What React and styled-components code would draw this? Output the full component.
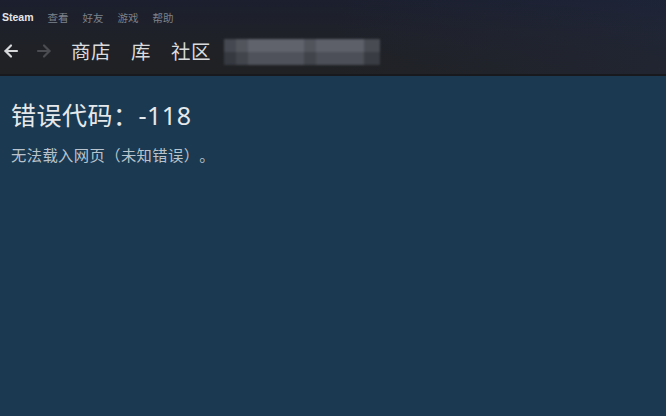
import React from "react";
import styled, { createGlobalStyle } from "styled-components";

const Global = createGlobalStyle`
  html, body { margin: 0; padding: 0; height: 100%; }
  body { background: #1b3951; overflow: hidden; text-spacing-trim: space-all; }
  #root { height: 100%; }
`;

const FONT = `"Noto Sans", "Noto Sans CJK SC", sans-serif`;

const Page = styled.div`
  width: 666px;
  height: 416px;
  display: flex;
  flex-direction: column;
  font-family: ${FONT};
`;

const Header = styled.header`
  height: 74px;
  flex: none;
  display: flex;
  flex-direction: column;
  background:
    linear-gradient(100deg, rgba(0,0,0,0) 50%, rgba(35,45,75,0.35) 100%),
    linear-gradient(to bottom, #1b1f2e 0%, #1f2129 45%, #202123 100%);
  border-bottom: 2px solid #18191c;
`;

const MenuBar = styled.nav`
  height: 34px;
  display: flex;
  align-items: center;
  gap: 14px;
  padding: 0 0 0 2px;
  font-size: 10.5px;
`;

const MenuItem = styled.span`
  color: ${(p) => (p.$primary ? "#e4e6e8" : "#7d828b")};
  font-weight: ${(p) => (p.$primary ? 700 : 400)};
  font-family: ${(p) => (p.$primary ? `"Liberation Sans", Arial, sans-serif` : FONT)};
`;

const NavBar = styled.div`
  flex: 1;
  display: flex;
  align-items: center;
  padding-left: 3px;
  padding-bottom: 7px;
`;

const ArrowBtn = styled.span`
  width: 16px;
  height: 16px;
  display: flex;
  margin-right: ${(p) => p.$mr}px;
  color: ${(p) => (p.$disabled ? "#4a4c52" : "#d6d8da")};
`;

const NavLink = styled.span`
  font-size: 19.5px;
  color: #d9dbdd;
  margin-right: ${(p) => p.$mr}px;
  letter-spacing: 0.5px;
`;

const Blur = styled.div`
  width: 156px;
  height: 26px;
  margin-left: 3px;
  margin-top: 2px;
  filter: blur(1.2px);
  background:
    linear-gradient(to bottom, rgba(255,255,255,0.04) 0 50%, rgba(0,0,0,0.12) 50% 100%),
    linear-gradient(to right, #3e4149 0 12px, #4b4e56 12px 24px, #5a5d66 24px 80px, #4a4d55 80px 92px, #575a63 92px 140px, #41444b 140px 156px);
`;

const Body = styled.main`
  flex: 1;
  background: #1b3951;
  padding: 20px 11px;
  color: #dfe3e6;
`;

const Title = styled.h1`
  margin: 0;
  font-size: 25px;
  font-weight: 400;
  line-height: 38px;
  letter-spacing: 0.5px;
  color: #e6e9eb;
`;

const Message = styled.p`
  margin: 10px 0 0;
  font-size: 15.3px;
  line-height: 22px;
  letter-spacing: 0.4px;
  color: #b9c3cb;
`;

const Arrow = ({ dir }) => (
  <svg width="16" height="16" viewBox="0 0 16 16" fill="none" stroke="currentColor" strokeWidth="2.2" strokeLinecap="round" strokeLinejoin="round">
    {dir === "left" ? (
      <>
        <path d="M14 8H2.5" />
        <path d="M8 2.5L2.5 8L8 13.5" />
      </>
    ) : (
      <>
        <path d="M2 8h11.5" />
        <path d="M8 2.5l5.5 5.5L8 13.5" />
      </>
    )}
  </svg>
);

export default function App() {
  return (
    <Page>
      <Global />
      <Header>
        <MenuBar>
          <MenuItem $primary>Steam</MenuItem>
          <MenuItem>查看</MenuItem>
          <MenuItem>好友</MenuItem>
          <MenuItem>游戏</MenuItem>
          <MenuItem>帮助</MenuItem>
        </MenuBar>
        <NavBar>
          <ArrowBtn $mr={17}><Arrow dir="left" /></ArrowBtn>
          <ArrowBtn $mr={19} $disabled><Arrow dir="right" /></ArrowBtn>
          <NavLink $mr={20}>商店</NavLink>
          <NavLink $mr={20}>库</NavLink>
          <NavLink $mr={10}>社区</NavLink>
          <Blur />
        </NavBar>
      </Header>
      <Body>
        <Title>错误代码：-118</Title>
        <Message>无法载入网页（未知错误）。</Message>
      </Body>
    </Page>
  );
}
